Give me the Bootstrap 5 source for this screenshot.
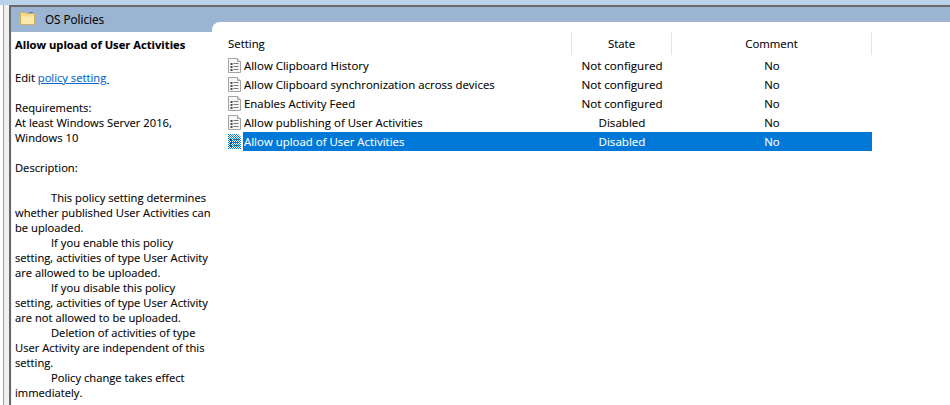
<!DOCTYPE html>
<html lang="en"><head><meta charset="utf-8"><title>OS Policies</title>
<link href="https://cdn.jsdelivr.net/npm/bootstrap@5.3.0/dist/css/bootstrap.min.css" rel="stylesheet">
<style>
html,body{height:405px;overflow:hidden;background:#fff}
body{font:11.2px/15px "Open Sans",sans-serif;color:#000;-webkit-text-stroke:.1px}
.strip{height:5px;background:#b9d1ea;flex:none}
.wrap{height:400px}
.gutter{width:9px;flex:none;margin-left:3px;border-left:1px solid #a0a0a0;background:#f0f0f0;margin-right:-3px}
.main{border-left:2px solid #696969;border-top:2px solid #696969;min-width:0}
.hd{height:25px;background:#9bb4d1;line-height:24px;font-size:11.7px;flex:none;padding-left:34px;margin-bottom:-10px}
.folder{position:absolute;left:9px;top:4px}
.desc{width:201px;flex:none;padding:15px 0 0 4px}
.desc p{margin:0}
.ttl{font-weight:700;margin-bottom:18px!important}
.gap1{margin-bottom:15px!important}
.gap2{margin-bottom:15px!important}
.ind{text-indent:36px}
.desc a{color:#0066cc}
.listp{flex:1;background:#fff;border-top-left-radius:8px;padding:10px 0 0 16px;min-width:0;position:relative;z-index:1}
.lhead{height:23px;line-height:23px;margin-bottom:1px;font-size:11.4px}
.lhead>div{border-right:1px solid #e5e5e5}
.c1{width:344px;flex:none;white-space:nowrap}
.c2{width:100px;flex:none;text-align:center}
.c3{width:200px;flex:none;text-align:center}
.lrow{height:19px;line-height:19px;font-size:11.4px}
.lrow .c2{font-size:11.6px}
.lrow .c1{display:flex;align-items:center;gap:1px}
.lbl{flex:1;padding-left:1px;letter-spacing:.02px}
.sel{color:#fff}
.sel .lbl,.sel .c2,.sel .c3{background:#0078d7}
svg{display:block;flex:none}
</style></head><body>
<div class="strip"></div>
<div class="d-flex wrap">
<div class="gutter"></div>
<div class="main flex-grow-1 d-flex flex-column position-relative">
<div class="hd">OS Policies
<svg class="folder" width="15" height="14" viewBox="0 0 15 14"><path d="M.5 2.5V1.5h5l1 1h8v11H.5z" fill="#f7dc8e" stroke="#cdb063"/><path d="M1.5 5.5H14V13H1.5z" fill="#fbe9ab"/><path d="M9 1h4v1H9z" fill="#3a86d0"/></svg>
</div>
<div class="d-flex flex-grow-1" style="min-height:0">
<div class="desc">
<p class="ttl">Allow upload of User Activities</p>
<p class="gap1">Edit <a href="#">policy setting&nbsp;</a></p>
<p>Requirements:</p>
<p class="gap2">At least Windows Server 2016, Windows 10</p>
<p class="gap2">Description:</p>
<p class="ind">This policy setting determines whether published User Activities can be uploaded.</p>
<p class="ind">If you enable this policy setting, activities of type User Activity are allowed to be uploaded.</p>
<p class="ind">If you disable this policy setting, activities of type User Activity are not allowed to be uploaded.</p>
<p class="ind">Deletion of activities of type User Activity are independent of this setting.</p>
<p class="ind">Policy change takes effect immediately.</p>
</div>
<div class="listp">
<div class="d-flex lhead"><div class="c1">Setting</div><div class="c2">State</div><div class="c3">Comment</div></div>
<svg width="0" height="0" class="position-absolute"><defs>
<symbol id="doc" viewBox="0 0 14 15"><path d="M.5.5h9l3 3v11H.5z" fill="#f7f7f7" stroke="#a3a3a3"/><path d="M9.5.5v3h3" fill="#e4e4e4" stroke="#a3a3a3"/><path d="M2.5 5h2v2h-2zM2.5 8h2v2h-2zM2.5 11h2v2h-2z" fill="#4a4a4a"/><path d="M5.5 5h5v1h-5zM5.5 8h5v1h-5zM5.5 11h5v1h-5z" fill="#7a7a7a"/></symbol>
<pattern id="chk" width="2" height="2" patternUnits="userSpaceOnUse"><rect width="2" height="2" fill="#fff"/><rect width="1" height="1" fill="#0078d7"/><rect x="1" y="1" width="1" height="1" fill="#0078d7"/></pattern>
</defs></svg>
<div class="d-flex lrow"><div class="c1"><svg width="14" height="15"><use href="#doc"/></svg><span class="lbl">Allow Clipboard History</span></div><div class="c2">Not configured</div><div class="c3">No</div></div>
<div class="d-flex lrow"><div class="c1"><svg width="14" height="15"><use href="#doc"/></svg><span class="lbl">Allow Clipboard synchronization across devices</span></div><div class="c2">Not configured</div><div class="c3">No</div></div>
<div class="d-flex lrow"><div class="c1"><svg width="14" height="15"><use href="#doc"/></svg><span class="lbl">Enables Activity Feed</span></div><div class="c2">Not configured</div><div class="c3">No</div></div>
<div class="d-flex lrow"><div class="c1"><svg width="14" height="15"><use href="#doc"/></svg><span class="lbl">Allow publishing of User Activities</span></div><div class="c2">Disabled</div><div class="c3">No</div></div>
<div class="d-flex lrow sel"><div class="c1"><svg width="14" height="15"><path d="M0 0h10l3 3v12H0z" fill="url(#chk)"/><path d="M2 5h2v2H2zM2 8h2v2H2zM2 11h2v2H2z" fill="#004f8c"/><path d="M5 5h6v1H5zM5 8h6v1H5zM5 11h6v1H5z" fill="#004f8c" opacity=".7"/></svg><span class="lbl">Allow upload of User Activities</span></div><div class="c2">Disabled</div><div class="c3">No</div></div>
</div>
</div>
</div>
</div>
</body></html>
